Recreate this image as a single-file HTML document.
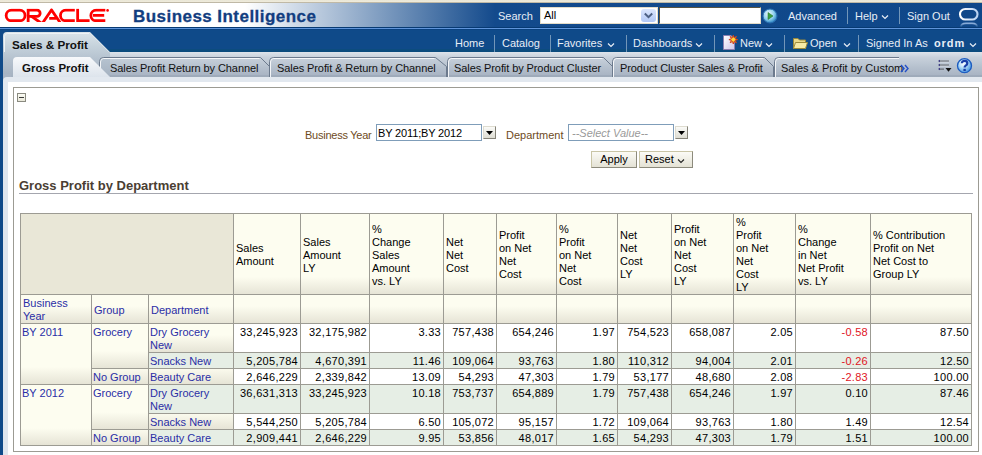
<!DOCTYPE html>
<html><head><meta charset="utf-8">
<style>
*{margin:0;padding:0;box-sizing:border-box}
html,body{width:982px;height:455px;overflow:hidden;background:#fff;font-family:"Liberation Sans",sans-serif;font-size:11px;color:#000}
.a{position:absolute;white-space:nowrap}
#topline{position:absolute;left:0;top:0;width:982px;height:3px;background:linear-gradient(#e9e6d6,#efebdb 60%,#9d9580)}
#hdr{position:absolute;left:0;top:3px;width:982px;height:24px;background:linear-gradient(to right,#fff 245px,#134a8c 495px,#0f4789)}
#hdrline{position:absolute;left:0;top:27px;width:982px;height:3px;background:linear-gradient(#073a73 0,#073a73 33%,#5f94da 33%,#5f94da 66%,#0a4280 66%)}
#band{position:absolute;left:0;top:30px;width:982px;height:22px;background:#0f4a89}
#leftblue{position:absolute;left:0;top:30px;width:3px;height:425px;background:#0f4a89}
.w{color:#e8eef6;font-size:11px}
.sep{position:absolute;width:1px;background:#7296b9}
.c{position:absolute;border:1px solid #9c9b93;overflow:hidden}
.hc{display:flex;align-items:center}
.hd{padding-left:2px;padding-top:2px;line-height:13px;font-size:11px;color:#000}
.t{padding:2px 2px 0 1px;line-height:13px;font-size:11px}
.b{color:#2a2ea6}
.n{text-align:right;padding-right:2px;letter-spacing:0.3px}
.red{color:#e0141e}
</style></head><body>
<div id="topline"></div>
<div id="hdr"></div>
<div id="hdrline"></div>
<div id="band"></div><div class="a" style="left:0;top:49px;width:982px;height:3px;background:#0c4c7e"></div>
<div id="leftblue"></div><div class="a" style="left:3px;top:88px;width:5px;height:367px;background:#dfe6ee"></div>

<svg class="a" style="left:0;top:0" width="112" height="27" viewBox="0 0 112 27">
<defs><clipPath id="oc"><rect x="0" y="8.6" width="112" height="13.4"/></clipPath></defs><g fill="none" stroke="#f00" stroke-width="2.8" clip-path="url(#oc)">
<rect x="6.15" y="10.05" width="18.9" height="10.7" rx="5.35"/>
<path d="M28.15,23 V10.05 H37 A3.15,3.15 0 0 1 37,16.35 H28.15"/><path d="M31.2,16.2 L41,23"/>
<path d="M42.6,23 L51.5,9.9 L60.4,23" stroke-linejoin="miter"/><path d="M49.2,18.3 H56.5"/>
<path d="M74.8,10.05 H65.8 A5.35,5.35 0 0 0 65.8,20.75 H74.8"/>
<path d="M77.65,8.8 V20.75 H89.6"/>
<path d="M105.3,10.05 H96.2 A5.35,5.35 0 0 0 96.2,20.75 H105.3 M93,15.45 H104.2"/>
</g>
<circle cx="107.6" cy="10.4" r="1.3" fill="#f00"/>
</svg>
<div class="a" id="bi" style="left:133px;top:7px;font-size:17px;font-weight:bold;color:#123d80;letter-spacing:0.45px;-webkit-text-stroke:0.3px #123d80">Business Intelligence</div>

<div class="a w" style="left:498px;top:10px">Search</div>
<div class="a" style="left:540px;top:7px;width:118px;height:17px;background:#fff;border:1px solid #e4dcc8"></div>
<div class="a" style="left:544px;top:9px;font-size:11px">All</div>
<div class="a" style="left:641px;top:9px;width:15px;height:13px;background:linear-gradient(#dbe6fd,#b2c8f6);border-radius:3px"></div>
<svg class="a" style="left:641px;top:8px" width="15" height="15"><path d="M3.8,5.5 L7.5,9.2 L11.2,5.5" fill="none" stroke="#4d6185" stroke-width="2"/></svg>
<div class="a" style="left:659px;top:7px;width:102px;height:17px;background:#fff;border:1px solid;border-color:#5a5440 #e4dcc8 #e4dcc8 #5a5440"></div>
<svg class="a" style="left:762px;top:8px" width="16" height="16"><defs><radialGradient id="gg" cx="40%" cy="35%" r="65%"><stop offset="0" stop-color="#f0fbff"/><stop offset="0.6" stop-color="#8fd0ee"/><stop offset="1" stop-color="#2f86c4"/></radialGradient></defs><circle cx="8" cy="8" r="7" fill="url(#gg)" stroke="#2a6fb0" stroke-width="1"/><path d="M6,4.5 L11,8 L6,11.5 Z" fill="#3aa040" stroke="#2a7a30" stroke-width="0.6"/></svg>
<div class="a w" style="left:788px;top:10px">Advanced</div>
<div class="sep" style="left:847px;top:7px;height:17px"></div>
<div class="a w" style="left:855px;top:10px">Help</div>
<svg class="a" style="left:881px;top:14px" width="8" height="6"><path d="M1,1.5 L4,4.5 L7,1.5" fill="none" stroke="#e8eef6" stroke-width="1.2"/></svg>
<div class="sep" style="left:899px;top:7px;height:17px"></div>
<div class="a w" style="left:907px;top:10px">Sign Out</div>
<svg class="a" style="left:957px;top:6px" width="24" height="21"><defs><linearGradient id="rg" x1="0" y1="0" x2="1" y2="0"><stop offset="0" stop-color="#ffffff"/><stop offset="1" stop-color="#b9d2f2"/></linearGradient><linearGradient id="rf" x1="0" y1="0" x2="0" y2="1"><stop offset="0" stop-color="#8fb0dc"/><stop offset="1" stop-color="#0f4a89"/></linearGradient></defs><rect x="3" y="3" width="17.5" height="10.5" rx="5.25" fill="none" stroke="url(#rg)" stroke-width="2.1"/><path d="M4,21 Q4,17.3 9,17.3 H15 Q20,17.3 20,21" fill="none" stroke="url(#rf)" stroke-width="1.8"/></svg>

<div class="a w" style="left:455px;top:37px">Home</div>
<div class="sep" style="left:494px;top:35px;height:17px"></div>
<div class="a w" style="left:502px;top:37px">Catalog</div>
<div class="sep" style="left:550px;top:35px;height:17px"></div>
<div class="a w" style="left:557px;top:37px">Favorites</div>
<svg class="a" style="left:607px;top:42px" width="8" height="6"><path d="M1,1.5 L4,4.5 L7,1.5" fill="none" stroke="#e8eef6" stroke-width="1.2"/></svg>
<div class="sep" style="left:626px;top:35px;height:17px"></div>
<div class="a w" style="left:633px;top:37px">Dashboards</div>
<svg class="a" style="left:695px;top:42px" width="8" height="6"><path d="M1,1.5 L4,4.5 L7,1.5" fill="none" stroke="#e8eef6" stroke-width="1.2"/></svg>
<div class="sep" style="left:714px;top:35px;height:17px"></div>
<svg class="a" style="left:722px;top:34px" width="17" height="17"><defs><linearGradient id="pg" x1="0" y1="0" x2="1" y2="1"><stop offset="0" stop-color="#ffffff"/><stop offset="1" stop-color="#cfc6ea"/></linearGradient></defs><path d="M1.5,1.5 H9 L12.5,5 V15.5 H1.5 Z" fill="url(#pg)" stroke="#8c7fb0" stroke-width="1"/><path d="M11.30,1.20 L12.07,3.75 L14.41,2.49 L13.15,4.83 L15.70,5.60 L13.15,6.37 L14.41,8.71 L12.07,7.45 L11.30,10.00 L10.53,7.45 L8.19,8.71 L9.45,6.37 L6.90,5.60 L9.45,4.83 L8.19,2.49 L10.53,3.75 Z" fill="#ffd83a" stroke="#d2401a" stroke-width="1"/></svg>
<div class="a w" style="left:740px;top:37px">New</div>
<svg class="a" style="left:765px;top:42px" width="8" height="6"><path d="M1,1.5 L4,4.5 L7,1.5" fill="none" stroke="#e8eef6" stroke-width="1.2"/></svg>
<div class="sep" style="left:784px;top:35px;height:17px"></div>
<svg class="a" style="left:792px;top:35px" width="17" height="15"><path d="M1.5,3.5 H6 L7.5,5 H13.5 V13.5 H1.5 Z" fill="#e9d98a" stroke="#9b8a3c" stroke-width="1"/><path d="M3.5,7.5 H15.5 L13.5,13.5 H1.5 Z" fill="#f6eaa6" stroke="#9b8a3c" stroke-width="1"/></svg>
<div class="a w" style="left:810px;top:37px">Open</div>
<svg class="a" style="left:843px;top:42px" width="8" height="6"><path d="M1,1.5 L4,4.5 L7,1.5" fill="none" stroke="#e8eef6" stroke-width="1.2"/></svg>
<div class="sep" style="left:858px;top:35px;height:17px"></div>
<div class="a w" style="left:866px;top:37px">Signed In As</div>
<div class="a w" style="left:934px;top:37px;font-weight:bold;font-size:11px;letter-spacing:0.9px">ordm</div>
<svg class="a" style="left:969px;top:42px" width="8" height="6"><path d="M1,1.5 L4,4.5 L7,1.5" fill="none" stroke="#e8eef6" stroke-width="1.2"/></svg>

<svg class="a" style="left:0;top:0" width="982" height="90">
<defs>
<linearGradient id="band2" x1="0" y1="0" x2="0" y2="1"><stop offset="0" stop-color="#dee4eb"/><stop offset="0.22" stop-color="#c8d1db"/><stop offset="0.6" stop-color="#b6c1ce"/><stop offset="1" stop-color="#a6b2c1"/></linearGradient>
<linearGradient id="mt" gradientUnits="userSpaceOnUse" x1="0" y1="32" x2="0" y2="77"><stop offset="0" stop-color="#dae4ea"/><stop offset="0.3" stop-color="#c6d3dc"/><stop offset="0.6" stop-color="#b5c2cf"/><stop offset="1" stop-color="#a4b1c0"/></linearGradient>
<linearGradient id="at" x1="0" y1="0" x2="0" y2="1"><stop offset="0" stop-color="#f7f9fb"/><stop offset="1" stop-color="#dde4ec"/></linearGradient>
</defs>
<rect x="100" y="52" width="882" height="25" fill="url(#band2)"/>
<rect x="3" y="75.5" width="979" height="1" fill="#8e9aab" opacity="0.6"/>
<path d="M3,77 V36 Q3,32 7,32 H90 L110,52 V77 Z" fill="url(#mt)"/><path d="M90,33 L109.5,52.5" stroke="#e4eaee" stroke-width="1" opacity="0.8"/>
<path d="M4.5,52 V36.5 Q4.5,33.5 7.5,33.5 H89" fill="none" stroke="#eef3f6" stroke-width="1"/>
<path d="M99.5,77 V61.5 Q99.5,57.5 103.5,57.5 H260.5 L269.5,66.5 V77" fill="none" stroke="#6c7a8d" stroke-width="1"/><path d="M100.5,77 V62 Q100.5,58.5 103.5,58.5 H259.5" fill="none" stroke="#fff" stroke-opacity="0.85" stroke-width="1"/><path d="M269.5,77 V61.5 Q269.5,57.5 273.5,57.5 H435.5 L446.5,66.5 V77" fill="none" stroke="#6c7a8d" stroke-width="1"/><path d="M270.5,77 V62 Q270.5,58.5 273.5,58.5 H434.5" fill="none" stroke="#fff" stroke-opacity="0.85" stroke-width="1"/><path d="M447.5,77 V61.5 Q447.5,57.5 451.5,57.5 H603.5 L612.5,66.5 V77" fill="none" stroke="#6c7a8d" stroke-width="1"/><path d="M448.5,77 V62 Q448.5,58.5 451.5,58.5 H602.5" fill="none" stroke="#fff" stroke-opacity="0.85" stroke-width="1"/><path d="M612.5,77 V61.5 Q612.5,57.5 616.5,57.5 H764.5 L773.5,66.5 V77" fill="none" stroke="#6c7a8d" stroke-width="1"/><path d="M613.5,77 V62 Q613.5,58.5 616.5,58.5 H763.5" fill="none" stroke="#fff" stroke-opacity="0.85" stroke-width="1"/><path d="M774.5,77 V61.5 Q774.5,57.5 778.5,57.5 H899" fill="none" stroke="#6c7a8d" stroke-width="1"/><path d="M775.5,77 V62 Q775.5,58.5 778.5,58.5 H899" fill="none" stroke="#fff" stroke-opacity="0.85" stroke-width="1"/>
<path d="M13,77 V61 Q13,57 17,57 H90 L110,77 Z" fill="url(#at)"/>
<rect x="3" y="74" width="8" height="8" fill="#a9b5c4"/><path d="M3,90 V81 Q3,77 7,77 H982 V90 Z" fill="#e2e8ef"/>
<rect x="8" y="82" width="974" height="10" fill="#fff"/>
</svg>
<div class="a" style="left:12px;top:38px;font-size:11.7px;font-weight:bold;color:#111">Sales &amp; Profit</div>
<div class="a" style="left:22px;top:62px;font-size:11.5px;font-weight:bold;color:#111">Gross Profit</div>
<div class="a" style="left:110px;top:62px;font-size:11px;color:#111;letter-spacing:-0.09px">Sales Profit Return by Channel</div>
<div class="a" style="left:277px;top:62px;font-size:11px;color:#111;letter-spacing:-0.09px">Sales Profit &amp; Return by Channel</div>
<div class="a" style="left:454px;top:62px;font-size:11px;color:#111;letter-spacing:-0.09px">Sales Profit by Product Cluster</div>
<div class="a" style="left:620px;top:62px;font-size:11px;color:#111;letter-spacing:-0.09px">Product Cluster Sales &amp; Profit</div>
<div class="a" style="left:781px;top:62px;font-size:11px;color:#111">Sales &amp; Profit by Custom</div>
<svg class="a" style="left:900px;top:64px" width="10" height="9"><path d="M1,1 L4,4.5 L1,8 M5,1 L8,4.5 L5,8" fill="none" stroke="#2450c8" stroke-width="1.4"/></svg>

<div class="a" style="left:13px;top:87px;width:966px;height:365px;border:1px solid #9c9b93"></div>
<div class="a" style="left:17px;top:93px;width:9px;height:9px;border:1px solid #8a8a80;background:linear-gradient(#fbfbf3,#e9e8da)"></div>
<div class="a" style="left:19px;top:97px;width:5px;height:1px;background:#3a3a3a"></div>

<div class="a" style="left:305px;top:129px;color:#6e4a1c;letter-spacing:-0.25px">Business Year</div>
<div class="a" style="left:376px;top:124px;width:106px;height:17px;border:1px solid #7f9db9;background:#fff"></div>
<div class="a" style="left:378px;top:127px;color:#000;letter-spacing:-0.15px">BY 2011;BY 2012</div>
<div class="a" style="left:483px;top:126px;width:13px;height:13px;border:1px solid;border-color:#dedcd0 #858378 #858378 #dedcd0;background:linear-gradient(#fbfbf8,#dddcd2)"></div>
<svg class="a" style="left:483px;top:126px" width="13" height="13"><path d="M3,5 H10 L6.5,9 Z" fill="#000"/></svg>

<div class="a" style="left:506px;top:129px;color:#6e4a1c">Department</div>
<div class="a" style="left:568px;top:124px;width:106px;height:17px;border:1px solid #7f9db9;background:#fff"></div>
<div class="a" style="left:572px;top:127px;color:#9a9a9a;font-style:italic">--Select Value--</div>
<div class="a" style="left:675px;top:126px;width:13px;height:13px;border:1px solid;border-color:#dedcd0 #858378 #858378 #dedcd0;background:linear-gradient(#fbfbf8,#dddcd2)"></div>
<svg class="a" style="left:675px;top:126px" width="13" height="13"><path d="M3,5 H10 L6.5,9 Z" fill="#000"/></svg>

<div class="a" style="left:591px;top:151px;width:46px;height:17px;border:1px solid;border-color:#c9c5a6 #8c8a7c #8c8a7c #c9c5a6;background:linear-gradient(#fbfbf6,#e4e2d5);text-align:center;line-height:15px;color:#000">Apply</div>
<div class="a" style="left:639px;top:151px;width:54px;height:17px;border:1px solid;border-color:#c9c5a6 #8c8a7c #8c8a7c #c9c5a6;background:linear-gradient(#fbfbf6,#e4e2d5);line-height:15px;padding-left:5px;color:#000">Reset</div>
<svg class="a" style="left:677px;top:158px" width="8" height="6"><path d="M1,1.5 L4,4.5 L7,1.5" fill="none" stroke="#222" stroke-width="1.1"/></svg>

<div class="a" style="left:19px;top:178px;font-size:13px;font-weight:bold;color:#4a3e33">Gross Profit by Department</div>
<div class="a" style="left:19px;top:193px;width:954px;height:1px;background:#a4a6ae"></div>

<svg class="a" style="left:936px;top:58px" width="18" height="16"><g fill="#33307a"><path d="M2,3 L4,1.8 V4.2 Z"/><path d="M2,7 L4,5.8 V8.2 Z"/><path d="M2,11 L4,9.8 V12.2 Z"/></g><g fill="#666a70"><rect x="4" y="2.5" width="9" height="1.2"/><rect x="4" y="6.5" width="9" height="1.2"/><rect x="4" y="10.5" width="4" height="1.2"/></g><g fill="#dfe4ea" opacity="0.7"><rect x="4" y="3.7" width="9" height="0.8"/><rect x="4" y="7.7" width="9" height="0.8"/></g><path d="M9.5,10 H15.5 L12.5,13.8 Z" fill="#111"/></svg>
<svg class="a" style="left:956px;top:57px" width="18" height="18"><defs><radialGradient id="hg" cx="40%" cy="35%" r="65%"><stop offset="0" stop-color="#ffffff"/><stop offset="0.45" stop-color="#b4dcf8"/><stop offset="1" stop-color="#4a96e0"/></radialGradient></defs><circle cx="8.5" cy="8.7" r="7" fill="url(#hg)" stroke="#1c5cc0" stroke-width="1.3"/><path d="M5.9,6.3 Q5.9,3.9 8.6,3.9 Q11.3,3.9 11.3,6.2 Q11.3,7.7 9.7,8.6 Q8.6,9.3 8.6,10.6" fill="none" stroke="#1a3fa8" stroke-width="2.2"/><rect x="7.4" y="11.8" width="2.4" height="2.2" fill="#1a3fa8"/></svg>
<!--TABLE-->
<div class="c " style="left:20px;top:213px;width:214px;height:82px;background:#e9e7d7"></div>
<div class="c hc" style="left:233px;top:213px;width:68px;height:82px;background:linear-gradient(to top,#e6e4d6 0,#fdfdf0 17px,#fdfdf0 100%)"><div class="hd">Sales<br>Amount</div></div>
<div class="c hc" style="left:300px;top:213px;width:70px;height:82px;background:linear-gradient(to top,#e6e4d6 0,#fdfdf0 17px,#fdfdf0 100%)"><div class="hd">Sales<br>Amount<br>LY</div></div>
<div class="c hc" style="left:369px;top:213px;width:75px;height:82px;background:linear-gradient(to top,#e6e4d6 0,#fdfdf0 17px,#fdfdf0 100%)"><div class="hd">%<br>Change<br>Sales<br>Amount<br>vs. LY</div></div>
<div class="c hc" style="left:443px;top:213px;width:54px;height:82px;background:linear-gradient(to top,#e6e4d6 0,#fdfdf0 17px,#fdfdf0 100%)"><div class="hd">Net<br>Net<br>Cost</div></div>
<div class="c hc" style="left:496px;top:213px;width:61px;height:82px;background:linear-gradient(to top,#e6e4d6 0,#fdfdf0 17px,#fdfdf0 100%)"><div class="hd">Profit<br>on Net<br>Net<br>Cost</div></div>
<div class="c hc" style="left:556px;top:213px;width:62px;height:82px;background:linear-gradient(to top,#e6e4d6 0,#fdfdf0 17px,#fdfdf0 100%)"><div class="hd">%<br>Profit<br>on Net<br>Net<br>Cost</div></div>
<div class="c hc" style="left:617px;top:213px;width:55px;height:82px;background:linear-gradient(to top,#e6e4d6 0,#fdfdf0 17px,#fdfdf0 100%)"><div class="hd">Net<br>Net<br>Cost<br>LY</div></div>
<div class="c hc" style="left:671px;top:213px;width:63px;height:82px;background:linear-gradient(to top,#e6e4d6 0,#fdfdf0 17px,#fdfdf0 100%)"><div class="hd">Profit<br>on Net<br>Net<br>Cost<br>LY</div></div>
<div class="c hc" style="left:733px;top:213px;width:63px;height:82px;background:linear-gradient(to top,#e6e4d6 0,#fdfdf0 17px,#fdfdf0 100%)"><div class="hd">%<br>Profit<br>on Net<br>Net<br>Cost<br>LY</div></div>
<div class="c hc" style="left:795px;top:213px;width:76px;height:82px;background:linear-gradient(to top,#e6e4d6 0,#fdfdf0 17px,#fdfdf0 100%)"><div class="hd">%<br>Change<br>in Net<br>Net Profit<br>vs. LY</div></div>
<div class="c hc" style="left:870px;top:213px;width:102px;height:82px;background:linear-gradient(to top,#e6e4d6 0,#fdfdf0 17px,#fdfdf0 100%)"><div class="hd">% Contribution<br>Profit on Net<br>Net Cost to<br>Group LY</div></div>
<div class="c hc" style="left:20px;top:294px;width:72px;height:30px;background:linear-gradient(to top,#e6e4d6 0,#fdfdf0 17px,#fdfdf0 100%)"><div class="hd b">Business<br>Year</div></div>
<div class="c hc" style="left:91px;top:294px;width:58px;height:30px;background:linear-gradient(to top,#e6e4d6 0,#fdfdf0 17px,#fdfdf0 100%)"><div class="hd b">Group</div></div>
<div class="c hc" style="left:148px;top:294px;width:86px;height:30px;background:linear-gradient(to top,#e6e4d6 0,#fdfdf0 17px,#fdfdf0 100%)"><div class="hd b">Department</div></div>
<div class="c " style="left:233px;top:294px;width:68px;height:30px;background:linear-gradient(to top,#e6e4d6 0,#fdfdf0 17px,#fdfdf0 100%)"></div>
<div class="c " style="left:300px;top:294px;width:70px;height:30px;background:linear-gradient(to top,#e6e4d6 0,#fdfdf0 17px,#fdfdf0 100%)"></div>
<div class="c " style="left:369px;top:294px;width:75px;height:30px;background:linear-gradient(to top,#e6e4d6 0,#fdfdf0 17px,#fdfdf0 100%)"></div>
<div class="c " style="left:443px;top:294px;width:54px;height:30px;background:linear-gradient(to top,#e6e4d6 0,#fdfdf0 17px,#fdfdf0 100%)"></div>
<div class="c " style="left:496px;top:294px;width:61px;height:30px;background:linear-gradient(to top,#e6e4d6 0,#fdfdf0 17px,#fdfdf0 100%)"></div>
<div class="c " style="left:556px;top:294px;width:62px;height:30px;background:linear-gradient(to top,#e6e4d6 0,#fdfdf0 17px,#fdfdf0 100%)"></div>
<div class="c " style="left:617px;top:294px;width:55px;height:30px;background:linear-gradient(to top,#e6e4d6 0,#fdfdf0 17px,#fdfdf0 100%)"></div>
<div class="c " style="left:671px;top:294px;width:63px;height:30px;background:linear-gradient(to top,#e6e4d6 0,#fdfdf0 17px,#fdfdf0 100%)"></div>
<div class="c " style="left:733px;top:294px;width:63px;height:30px;background:linear-gradient(to top,#e6e4d6 0,#fdfdf0 17px,#fdfdf0 100%)"></div>
<div class="c " style="left:795px;top:294px;width:76px;height:30px;background:linear-gradient(to top,#e6e4d6 0,#fdfdf0 17px,#fdfdf0 100%)"></div>
<div class="c " style="left:870px;top:294px;width:102px;height:30px;background:linear-gradient(to top,#e6e4d6 0,#fdfdf0 17px,#fdfdf0 100%)"></div>
<div class="c " style="left:20px;top:323px;width:72px;height:62px;background:linear-gradient(to top,#e6e4d6 0,#fdfdf0 17px,#fdfdf0 100%)"><div class="t b">BY 2011</div></div>
<div class="c " style="left:91px;top:323px;width:58px;height:46px;background:linear-gradient(to top,#e6e4d6 0,#fdfdf0 17px,#fdfdf0 100%)"><div class="t b">Grocery</div></div>
<div class="c " style="left:91px;top:368px;width:58px;height:17px;background:linear-gradient(to top,#e6e4d6 0,#fdfdf0 17px,#fdfdf0 100%)"><div class="t b">No Group</div></div>
<div class="c " style="left:20px;top:384px;width:72px;height:62px;background:linear-gradient(to top,#e6e4d6 0,#fdfdf0 17px,#fdfdf0 100%)"><div class="t b">BY 2012</div></div>
<div class="c " style="left:91px;top:384px;width:58px;height:46px;background:linear-gradient(to top,#e6e4d6 0,#fdfdf0 17px,#fdfdf0 100%)"><div class="t b">Grocery</div></div>
<div class="c " style="left:91px;top:429px;width:58px;height:17px;background:linear-gradient(to top,#e6e4d6 0,#fdfdf0 17px,#fdfdf0 100%)"><div class="t b">No Group</div></div>
<div class="c " style="left:148px;top:323px;width:86px;height:30px;background:linear-gradient(to top,#e6e4d6 0,#fdfdf0 17px,#fdfdf0 100%)"><div class="t b">Dry Grocery<br>New</div></div>
<div class="c " style="left:233px;top:323px;width:68px;height:30px;background:#fff"><div class="t n">33,245,923</div></div>
<div class="c " style="left:300px;top:323px;width:70px;height:30px;background:#fff"><div class="t n">32,175,982</div></div>
<div class="c " style="left:369px;top:323px;width:75px;height:30px;background:#fff"><div class="t n">3.33</div></div>
<div class="c " style="left:443px;top:323px;width:54px;height:30px;background:#fff"><div class="t n">757,438</div></div>
<div class="c " style="left:496px;top:323px;width:61px;height:30px;background:#fff"><div class="t n">654,246</div></div>
<div class="c " style="left:556px;top:323px;width:62px;height:30px;background:#fff"><div class="t n">1.97</div></div>
<div class="c " style="left:617px;top:323px;width:55px;height:30px;background:#fff"><div class="t n">754,523</div></div>
<div class="c " style="left:671px;top:323px;width:63px;height:30px;background:#fff"><div class="t n">658,087</div></div>
<div class="c " style="left:733px;top:323px;width:63px;height:30px;background:#fff"><div class="t n">2.05</div></div>
<div class="c " style="left:795px;top:323px;width:76px;height:30px;background:#fff"><div class="t n red">-0.58</div></div>
<div class="c " style="left:870px;top:323px;width:102px;height:30px;background:#fff"><div class="t n">87.50</div></div>
<div class="c " style="left:148px;top:352px;width:86px;height:17px;background:#e6eee5"><div class="t b">Snacks New</div></div>
<div class="c " style="left:233px;top:352px;width:68px;height:17px;background:#e6eee5"><div class="t n">5,205,784</div></div>
<div class="c " style="left:300px;top:352px;width:70px;height:17px;background:#e6eee5"><div class="t n">4,670,391</div></div>
<div class="c " style="left:369px;top:352px;width:75px;height:17px;background:#e6eee5"><div class="t n">11.46</div></div>
<div class="c " style="left:443px;top:352px;width:54px;height:17px;background:#e6eee5"><div class="t n">109,064</div></div>
<div class="c " style="left:496px;top:352px;width:61px;height:17px;background:#e6eee5"><div class="t n">93,763</div></div>
<div class="c " style="left:556px;top:352px;width:62px;height:17px;background:#e6eee5"><div class="t n">1.80</div></div>
<div class="c " style="left:617px;top:352px;width:55px;height:17px;background:#e6eee5"><div class="t n">110,312</div></div>
<div class="c " style="left:671px;top:352px;width:63px;height:17px;background:#e6eee5"><div class="t n">94,004</div></div>
<div class="c " style="left:733px;top:352px;width:63px;height:17px;background:#e6eee5"><div class="t n">2.01</div></div>
<div class="c " style="left:795px;top:352px;width:76px;height:17px;background:#e6eee5"><div class="t n red">-0.26</div></div>
<div class="c " style="left:870px;top:352px;width:102px;height:17px;background:#e6eee5"><div class="t n">12.50</div></div>
<div class="c " style="left:148px;top:368px;width:86px;height:17px;background:linear-gradient(to top,#e6e4d6 0,#fdfdf0 17px,#fdfdf0 100%)"><div class="t b">Beauty Care</div></div>
<div class="c " style="left:233px;top:368px;width:68px;height:17px;background:#fff"><div class="t n">2,646,229</div></div>
<div class="c " style="left:300px;top:368px;width:70px;height:17px;background:#fff"><div class="t n">2,339,842</div></div>
<div class="c " style="left:369px;top:368px;width:75px;height:17px;background:#fff"><div class="t n">13.09</div></div>
<div class="c " style="left:443px;top:368px;width:54px;height:17px;background:#fff"><div class="t n">54,293</div></div>
<div class="c " style="left:496px;top:368px;width:61px;height:17px;background:#fff"><div class="t n">47,303</div></div>
<div class="c " style="left:556px;top:368px;width:62px;height:17px;background:#fff"><div class="t n">1.79</div></div>
<div class="c " style="left:617px;top:368px;width:55px;height:17px;background:#fff"><div class="t n">53,177</div></div>
<div class="c " style="left:671px;top:368px;width:63px;height:17px;background:#fff"><div class="t n">48,680</div></div>
<div class="c " style="left:733px;top:368px;width:63px;height:17px;background:#fff"><div class="t n">2.08</div></div>
<div class="c " style="left:795px;top:368px;width:76px;height:17px;background:#fff"><div class="t n red">-2.83</div></div>
<div class="c " style="left:870px;top:368px;width:102px;height:17px;background:#fff"><div class="t n">100.00</div></div>
<div class="c " style="left:148px;top:384px;width:86px;height:30px;background:#e6eee5"><div class="t b">Dry Grocery<br>New</div></div>
<div class="c " style="left:233px;top:384px;width:68px;height:30px;background:#e6eee5"><div class="t n">36,631,313</div></div>
<div class="c " style="left:300px;top:384px;width:70px;height:30px;background:#e6eee5"><div class="t n">33,245,923</div></div>
<div class="c " style="left:369px;top:384px;width:75px;height:30px;background:#e6eee5"><div class="t n">10.18</div></div>
<div class="c " style="left:443px;top:384px;width:54px;height:30px;background:#e6eee5"><div class="t n">753,737</div></div>
<div class="c " style="left:496px;top:384px;width:61px;height:30px;background:#e6eee5"><div class="t n">654,889</div></div>
<div class="c " style="left:556px;top:384px;width:62px;height:30px;background:#e6eee5"><div class="t n">1.79</div></div>
<div class="c " style="left:617px;top:384px;width:55px;height:30px;background:#e6eee5"><div class="t n">757,438</div></div>
<div class="c " style="left:671px;top:384px;width:63px;height:30px;background:#e6eee5"><div class="t n">654,246</div></div>
<div class="c " style="left:733px;top:384px;width:63px;height:30px;background:#e6eee5"><div class="t n">1.97</div></div>
<div class="c " style="left:795px;top:384px;width:76px;height:30px;background:#e6eee5"><div class="t n">0.10</div></div>
<div class="c " style="left:870px;top:384px;width:102px;height:30px;background:#e6eee5"><div class="t n">87.46</div></div>
<div class="c " style="left:148px;top:413px;width:86px;height:17px;background:linear-gradient(to top,#e6e4d6 0,#fdfdf0 17px,#fdfdf0 100%)"><div class="t b">Snacks New</div></div>
<div class="c " style="left:233px;top:413px;width:68px;height:17px;background:#fff"><div class="t n">5,544,250</div></div>
<div class="c " style="left:300px;top:413px;width:70px;height:17px;background:#fff"><div class="t n">5,205,784</div></div>
<div class="c " style="left:369px;top:413px;width:75px;height:17px;background:#fff"><div class="t n">6.50</div></div>
<div class="c " style="left:443px;top:413px;width:54px;height:17px;background:#fff"><div class="t n">105,072</div></div>
<div class="c " style="left:496px;top:413px;width:61px;height:17px;background:#fff"><div class="t n">95,157</div></div>
<div class="c " style="left:556px;top:413px;width:62px;height:17px;background:#fff"><div class="t n">1.72</div></div>
<div class="c " style="left:617px;top:413px;width:55px;height:17px;background:#fff"><div class="t n">109,064</div></div>
<div class="c " style="left:671px;top:413px;width:63px;height:17px;background:#fff"><div class="t n">93,763</div></div>
<div class="c " style="left:733px;top:413px;width:63px;height:17px;background:#fff"><div class="t n">1.80</div></div>
<div class="c " style="left:795px;top:413px;width:76px;height:17px;background:#fff"><div class="t n">1.49</div></div>
<div class="c " style="left:870px;top:413px;width:102px;height:17px;background:#fff"><div class="t n">12.54</div></div>
<div class="c " style="left:148px;top:429px;width:86px;height:17px;background:#e6eee5"><div class="t b">Beauty Care</div></div>
<div class="c " style="left:233px;top:429px;width:68px;height:17px;background:#e6eee5"><div class="t n">2,909,441</div></div>
<div class="c " style="left:300px;top:429px;width:70px;height:17px;background:#e6eee5"><div class="t n">2,646,229</div></div>
<div class="c " style="left:369px;top:429px;width:75px;height:17px;background:#e6eee5"><div class="t n">9.95</div></div>
<div class="c " style="left:443px;top:429px;width:54px;height:17px;background:#e6eee5"><div class="t n">53,856</div></div>
<div class="c " style="left:496px;top:429px;width:61px;height:17px;background:#e6eee5"><div class="t n">48,017</div></div>
<div class="c " style="left:556px;top:429px;width:62px;height:17px;background:#e6eee5"><div class="t n">1.65</div></div>
<div class="c " style="left:617px;top:429px;width:55px;height:17px;background:#e6eee5"><div class="t n">54,293</div></div>
<div class="c " style="left:671px;top:429px;width:63px;height:17px;background:#e6eee5"><div class="t n">47,303</div></div>
<div class="c " style="left:733px;top:429px;width:63px;height:17px;background:#e6eee5"><div class="t n">1.79</div></div>
<div class="c " style="left:795px;top:429px;width:76px;height:17px;background:#e6eee5"><div class="t n">1.51</div></div>
<div class="c " style="left:870px;top:429px;width:102px;height:17px;background:#e6eee5"><div class="t n">100.00</div></div>
<!--/TABLE-->
</body></html>
